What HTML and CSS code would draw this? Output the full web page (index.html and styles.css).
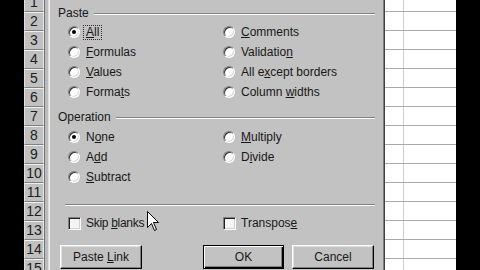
FILE: index.html
```html
<!DOCTYPE html>
<html>
<head>
<meta charset="utf-8">
<link rel="stylesheet" href="styles.css">
</head>
<body>
<div class="screen">
  <div class="edge"></div>
  <div class="rowhdrs">
    <div class="rh">1</div><div class="rh">2</div><div class="rh">3</div><div class="rh">4</div><div class="rh">5</div>
    <div class="rh">6</div><div class="rh">7</div><div class="rh">8</div><div class="rh">9</div><div class="rh">10</div>
    <div class="rh">11</div><div class="rh">12</div><div class="rh">13</div><div class="rh">14</div><div class="rh">15</div>
  </div>
  <div class="gutter"></div>
  <div class="dialog">
    <div class="legend"><span>Paste</span><i class="rule"></i></div>
    <div class="opts">
      <div class="opt"><span class="radio on"></span><span class="focus"><u>A</u>ll</span></div>
      <div class="opt"><span class="radio"></span><span><u>C</u>omments</span></div>
      <div class="opt"><span class="radio"></span><span><u>F</u>ormulas</span></div>
      <div class="opt"><span class="radio"></span><span>Validatio<u>n</u></span></div>
      <div class="opt"><span class="radio"></span><span><u>V</u>alues</span></div>
      <div class="opt"><span class="radio"></span><span>All e<u>x</u>cept borders</span></div>
      <div class="opt"><span class="radio"></span><span>Forma<u>t</u>s</span></div>
      <div class="opt"><span class="radio"></span><span>Column <u>w</u>idths</span></div>
    </div>
    <div class="legend op"><span>Operation</span><i class="rule"></i></div>
    <div class="opts op-opts">
      <div class="opt"><span class="radio on"></span><span>N<u>o</u>ne</span></div>
      <div class="opt"><span class="radio"></span><span><u>M</u>ultiply</span></div>
      <div class="opt"><span class="radio"></span><span>A<u>d</u>d</span></div>
      <div class="opt"><span class="radio"></span><span>D<u>i</u>vide</span></div>
      <div class="opt"><span class="radio"></span><span><u>S</u>ubtract</span></div>
    </div>
    <i class="sep"></i>
    <div class="opts checks">
      <div class="opt"><span class="check"></span><span class="skip">Skip <u>b</u>lanks</span></div>
      <div class="opt"><span class="check"></span><span>Transpos<u>e</u></span></div>
    </div>
    <div class="buttons">
      <div class="btn"><span>Paste <u>L</u>ink</span></div>
      <div class="btn-group">
        <div class="btn default"><span>OK</span></div>
        <div class="btn"><span>Cancel</span></div>
      </div>
    </div>
    <svg class="cursor" width="13" height="21" viewBox="0 0 13 21"><path d="M0.5 0.5 L0.5 16.5 L4.5 12.5 L7.5 19.5 L9.5 18.5 L6.5 11.5 L11.5 11.5 Z" fill="#fff" stroke="#000" stroke-width="1"/></svg>
  </div>
  <div class="sheet">
    <div class="sr"><i></i></div><div class="sr"><i></i></div><div class="sr"><i></i></div><div class="sr"><i></i></div><div class="sr"><i></i></div>
    <div class="sr"><i></i></div><div class="sr"><i></i></div><div class="sr"><i></i></div><div class="sr"><i></i></div><div class="sr"><i></i></div>
    <div class="sr"><i></i></div><div class="sr"><i></i></div><div class="sr"><i></i></div><div class="sr"><i></i></div><div class="sr"><i></i></div>
  </div>
  <div class="edge right"></div>
</div>
</body>
</html>
```

FILE: styles.css
```css
html, body {
  margin: 0;
  padding: 0;
  width: 480px;
  height: 270px;
  overflow: hidden;
  background: #000;
}
.screen {
  display: flex;
  width: 480px;
  height: 270px;
  overflow: hidden;
  font-family: "Liberation Sans", Arial, sans-serif;
}
.edge {
  width: 24px;
  flex: none;
  background: #000;
}
.rowhdrs {
  width: 20px;
  flex: none;
  display: flex;
  flex-direction: column;
  margin-top: -7px;
  background: #c0c0c0;
}
.rh {
  height: 19px;
  flex: none;
  box-sizing: border-box;
  border-top: 1px solid #f0f0f0;
  border-left: 1px solid #e0e0e0;
  border-right: 1px solid #e8e8e8;
  border-bottom: 1px solid #808080;
  font-size: 14px;
  line-height: 17px;
  text-align: center;
  color: #202020;
  background: #c0c0c0;
}
.gutter {
  width: 4px;
  flex: none;
  background: #bcbcbc;
  border-left: 1px solid #707070;
  box-sizing: border-box;
}
.dialog {
  position: relative;
  width: 337px;
  flex: none;
  box-sizing: border-box;
  background: #c2c2c2;
  border-left: 1px solid #dcdcdc;
  border-right: 1px solid #404040;
  box-shadow: inset 1px 0 0 #f4f4f4, inset -1px 0 0 #808080;
  padding: 6px 9px 0 9px;
  display: flex;
  flex-direction: column;
  font-size: 12px;
  color: #181818;
}
.legend {
  height: 14px;
  display: flex;
  align-items: center;
  line-height: 14px;
}
.legend.op {
  margin-top: 8px;
}
.rule {
  flex: 1;
  margin-left: 5px;
  height: 0;
  border-top: 1px solid #808080;
  border-bottom: 1px solid #fff;
  margin-top: 2px;
}
.opts {
  margin-top: 2px;
  margin-left: 10px;
  display: grid;
  grid-template-columns: 155px 1fr;
  grid-auto-rows: 20px;
}
.opts.op-opts {
  margin-top: 3px;
}
.opt {
  display: flex;
  align-items: center;
  gap: 6px;
  white-space: nowrap;
}
.radio {
  position: relative;
  width: 12px;
  height: 12px;
  flex: none;
  box-sizing: border-box;
  border-radius: 50%;
  border: 1px solid;
  border-color: #808080 #ffffff #ffffff #808080;
  background: #fff;
  box-shadow: inset 1px 1px 0 #303030, inset -1px -1px 0 #d8d8d8;
}
.radio.on::after {
  content: "";
  position: absolute;
  left: 3px;
  top: 3px;
  width: 4px;
  height: 4px;
  border-radius: 50%;
  background: #000;
}
.focus {
  margin-left: -3px;
  padding: 0 2px;
  border: 1px dotted #303030;
  line-height: 13px;
}
.sep {
  display: block;
  margin: 17px 0 0 7px;
  height: 0;
  border-top: 1px solid #808080;
  border-bottom: 1px solid #fff;
}
.opts.checks {
  margin-top: 7px;
}
.check {
  width: 13px;
  height: 13px;
  flex: none;
  box-sizing: border-box;
  border: 1px solid;
  border-color: #808080 #ffffff #ffffff #808080;
  background: #f4f4f4;
  box-shadow: inset 1px 1px 0 #202020, inset -1px -1px 0 #d0d0d0;
}
.opts.checks .opt {
  gap: 5px;
}
.skip {
  letter-spacing: -0.3px;
}
.buttons {
  margin: 12px 1px 0 2px;
  display: flex;
  justify-content: space-between;
}
.btn-group {
  display: flex;
  gap: 8px;
}
.btn {
  width: 82px;
  height: 24px;
  box-sizing: border-box;
  background: #c2c2c2;
  border: 1px solid;
  border-color: #ffffff #000000 #000000 #ffffff;
  box-shadow: inset -1px -1px 0 #808080, inset 1px 1px 0 #dfdfdf;
  display: flex;
  align-items: center;
  justify-content: center;
  font-size: 12px;
  color: #181818;
  white-space: nowrap;
}
.btn.default {
  width: 81px;
  border: 1px solid #000;
  box-shadow: inset 1px 1px 0 #fff, inset -1px -1px 0 #000, inset -2px -2px 0 #808080;
}
.cursor {
  position: absolute;
  left: 98px;
  top: 211px;
}
.sheet {
  width: 71px;
  flex: none;
  display: flex;
  flex-direction: column;
  margin-top: -7px;
  background: #fff;
}
.sr {
  height: 19px;
  flex: none;
  box-sizing: border-box;
  border-bottom: 1px solid #aaaaaa;
  display: flex;
}
.sr i {
  width: 19px;
  box-sizing: border-box;
  border-right: 1px solid #cfcfcf;
}
.edge.right {
  width: 24px;
}
```
